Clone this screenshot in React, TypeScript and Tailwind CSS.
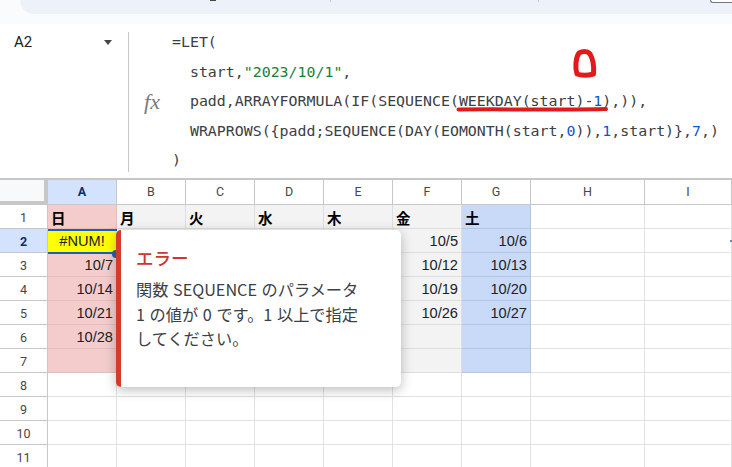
import React from 'react';

const cols = ['A', 'B', 'C', 'D', 'E', 'F', 'G', 'H', 'I'];
const days = ['日', '月', '火', '水', '木', '金', '土'];

// values by row number, only what is visible around the error popup
const values: Record<number, Record<string, string>> = {
  2: { F: '10/5', G: '10/6' },
  3: { A: '10/7', F: '10/12', G: '10/13' },
  4: { A: '10/14', F: '10/19', G: '10/20' },
  5: { A: '10/21', F: '10/26', G: '10/27' },
  6: { A: '10/28' },
};

const cellTone = (col: string, row: number) => {
  if (row > 7) return 'bg-white border-[#e1e1e1]';
  if (col === 'A') return 'bg-[#f4cccc] border-[#e3bdbd]';
  if (col === 'G') return 'bg-[#c9daf8] border-[#b4c6e4]';
  if (col === 'H' || col === 'I') return 'bg-white border-[#e1e1e1]';
  return 'bg-[#f3f3f3] border-[#dedede]';
};

const FormulaBar = () => (
  <div className="relative flex h-[154px] bg-white text-[#202124]">
    <div className="flex w-[128px] items-start justify-between pl-[14px] pr-[16px] pt-[8px]">
      <span className="font-['Roboto',sans-serif] text-[15px] leading-[20px]">A2</span>
      <svg width="8" height="5" viewBox="0 0 8 5" className="mt-[8px]">
        <path d="M0 0h8L4 5z" fill="#444746" />
      </svg>
    </div>
    <div className="mt-[8px] h-[140px] w-px bg-[#c7c7c7]" />
    <div className="flex w-[43px] items-start justify-center pl-[3px] pt-[66px]">
      <span className="font-['Liberation_Serif',serif] text-[22px] italic leading-[24px] text-[#7a7a7a]">fx</span>
    </div>
    <pre className="pt-[4px] font-['DejaVu_Sans_Mono',monospace] text-[14.9px] leading-[29.5px] text-[#3c4043]">
      <div>=LET(</div>
      <div>{'  start,'}<span className="text-[#188038]">"2023/10/1"</span>,</div>
      <div>{'  padd,ARRAYFORMULA(IF(SEQUENCE(WEEKDAY(start)-'}<span className="text-[#1155cc]">1</span>),)),</div>
      <div>{'  WRAPROWS({padd;SEQUENCE(DAY(EOMONTH(start,'}<span className="text-[#1155cc]">0</span>)),<span className="text-[#1155cc]">1</span>,start){'},'}<span className="text-[#1155cc]">7</span>,)</div>
      <div>)</div>
    </pre>
    {/* red pen marks on top of the formula */}
    <svg className="absolute left-0 top-0" width="732" height="154" viewBox="0 0 732 154" fill="none">
      <path d="M579 29C583 27 588 27 590 30C593 35 594 44 593.500 50C588 51.500 581 51.500 577 50C575 44 575.500 34 579 29Z" stroke="#e3191c" strokeWidth="5" strokeLinejoin="round" />
      <path d="M458.500 85.500C500 85 570 86 606 85" stroke="#dd1a1e" strokeWidth="4" strokeLinecap="round" />
    </svg>
  </div>
);

const Grid = () => (
  <div className="grid grid-cols-[48px_repeat(7,69px)_114px_1fr] grid-rows-[25px_repeat(11,24px)] border-t-2 border-[#c7c7c7] font-['Liberation_Sans','Noto_Sans_CJK_JP',sans-serif]">
    <div className="border-b-4 border-r-4 border-[#c7c7c7] bg-[#f8f9fa]" />
    {cols.map(c => (
      <div
        key={c}
        className={`flex items-center justify-center border-b border-r border-[#c7c7c7] font-['Roboto',sans-serif] text-[12.5px] ${c === 'A' ? 'bg-[#d3e3fd] font-bold text-[#0b2f66]' : 'bg-white text-[#444746]'}`}
      >
        {c}
      </div>
    ))}
    {Array.from({ length: 11 }, (_, i) => i + 1).map(row => (
      <React.Fragment key={row}>
        <div
          className={`flex items-center justify-center border-b border-r border-[#c7c7c7] pt-[3px] font-['Roboto',sans-serif] text-[12.5px] ${row === 2 ? 'bg-[#d3e3fd] font-bold text-[#0b2f66]' : 'bg-white text-[#444746]'}`}
        >
          {row}
        </div>
        {cols.map((c, ci) => {
          if (row === 1 && ci < 7) {
            return (
              <div key={c} className={`flex items-center border-b border-r pl-[3px] pt-[2px] font-['Noto_Sans_CJK_JP',sans-serif] text-[14.5px] font-bold text-black ${cellTone(c, row)}`}>
                {days[ci]}
              </div>
            );
          }
          if (row === 2 && c === 'A') {
            return (
              <div key={c} className="flex items-center justify-center border-b border-r border-[#dedede] bg-[#ffff00] pt-[3px] text-[14.6px] text-[#202124]">
                #NUM!
              </div>
            );
          }
          return (
            <div key={c} className={`flex items-center justify-end border-b border-r pr-[3px] pt-[3px] text-[14.6px] text-[#202124] ${cellTone(c, row)}`}>
              {values[row]?.[c]}
            </div>
          );
        })}
      </React.Fragment>
    ))}
  </div>
);

const ErrorPopup = () => (
  <div className="absolute left-[116px] top-[230px] h-[157px] w-[285px] rounded-[5px] border-l-[5px] border-[#d33b2c] bg-white pl-[15px] pt-[16px] font-['Noto_Sans_CJK_JP',sans-serif] shadow-[0_3px_12px_rgba(60,64,67,0.35)]">
    <div className="text-[17.5px] font-medium leading-[24px] text-[#d0342c]">エラー</div>
    <p className="mt-[7px] text-[16.2px] font-normal leading-[24.5px] text-[#3c4043] [word-spacing:1px]">
      関数 SEQUENCE のパラメータ
      <br />1 の値が 0 です。1 以上で指定
      <br />してください。
    </p>
  </div>
);

export default function App() {
  return (
    <div className="relative h-[467px] w-[732px] overflow-hidden bg-white">
      <div className="h-[24px] bg-[#f9fbfd] pl-[20px]">
        <div className="relative h-[14px] rounded-bl-[16px] bg-[#edf2fa]">
          <div className="absolute left-[190px] top-0 h-[1px] w-[6px] bg-[#444746]" />
          <div className="absolute left-[310px] top-0 h-[2px] w-px bg-[#c7c7c7]" />
          <div className="absolute left-[518px] top-0 h-[2px] w-px bg-[#c7c7c7]" />
          <div className="absolute left-[690px] top-0 h-[3px] w-[30px] rounded-bl-[4px] border-b border-l border-[#747775] bg-white" />
        </div>
      </div>
      <FormulaBar />
      <Grid />
      {/* selection outline of A2 */}
      <div className="absolute left-[48px] top-[229px] h-[25px] w-[69px] border-y-2 border-[#1a5fb4]" />
      <div className="absolute left-[112px] top-[250px] h-[8px] w-[8px] rounded-full bg-[#1a5fb4]" />
      <div className="absolute left-[730px] top-[240px] h-[2px] w-[2px] bg-[#6f7fc8]" />
      <ErrorPopup />
    </div>
  );
}
